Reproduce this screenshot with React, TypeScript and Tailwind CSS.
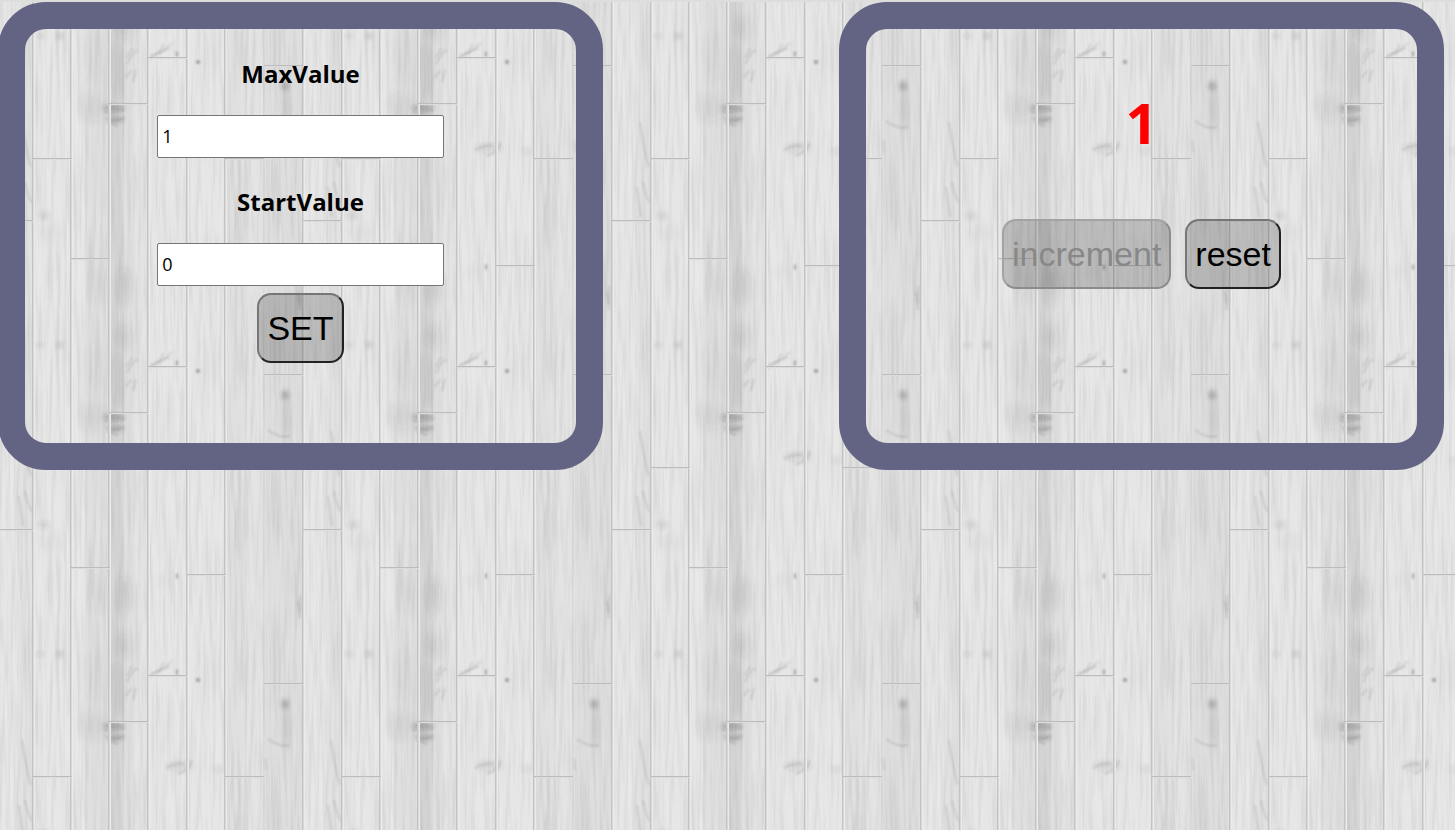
import { useState } from "react";
import type { ReactNode } from "react";

const seams = [33, 71, 109, 148, 187, 225, 264, 303];

const joints = [
  { x: -6, y: 219 },
  { x: 303, y: 219 },
  { x: 33, y: 157 },
  { x: 71, y: 257 },
  { x: 109, y: 102 },
  { x: 148, y: 56 },
  { x: 187, y: 264 },
  { x: 225, y: 157 },
  { x: 264, y: 64 },
];

const shades = [
  { x: 17, w: 15, o: 0.02 },
  { x: 85, w: 24, o: 0.03 },
  { x: 109, w: 15, o: 0.08 },
  { x: 124, w: 10, o: 0.03 },
  { x: 134, w: 14, o: 0.01 },
  { x: 225, w: 22, o: 0.03 },
  { x: 247, w: 17, o: 0.01 },
  { x: 264, w: 39, o: 0.04 },
];

const knots = [
  { x: 40, y: 34, rx: 4, ry: 2, o: 0.12 },
  { x: 60, y: 34, rx: 3, ry: 3, o: 0.18 },
  { x: 114, y: 106, rx: 11, ry: 3, o: 0.3 },
  { x: 116, y: 117, rx: 8, ry: 4, o: 0.2 },
  { x: 118, y: 70, rx: 6, ry: 28, o: 0.08 },
  { x: 285, y: 84, rx: 4, ry: 5, o: 0.26 },
  { x: 180, y: 146, rx: 14, ry: 5, o: 0.08 },
  { x: 219, y: 149, rx: 6, ry: 3, o: 0.08 },
  { x: 44, y: 214, rx: 6, ry: 4, o: 0.1 },
];

const stains = [
  { x: 94, y: 105, rx: 14, ry: 14, o: 0.07 },
  { x: 96, y: 60, rx: 10, ry: 30, o: 0.05 },
  { x: 100, y: 284, rx: 8, ry: 18, o: 0.05 },
  { x: 124, y: 26, rx: 8, ry: 12, o: 0.08 },
  { x: 124, y: 284, rx: 8, ry: 18, o: 0.09 },
  { x: 285, y: 106, rx: 5, ry: 20, o: 0.06 },
  { x: 50, y: 230, rx: 12, ry: 8, o: 0.03 },
  { x: 240, y: 220, rx: 5, ry: 24, o: 0.05 },
  { x: 162, y: 270, rx: 4, ry: 6, o: 0.05 },
];

const cracks = [
  "M22 120Q26 150 31 165M25 180Q28 196 32 201M19 185L23 215",
  "M127 62Q136 44 138 50M126 76Q130 68 132 70M133 80L136 68M127 56L132 46",
  "M149 57Q160 52 164 42M150 54L170 46M158 53L172 41",
  "M104 110Q116 112 124 108M106 116Q114 122 124 116M107 120L118 124",
  "M268 119Q280 128 290 125",
  "M178 154Q190 150 192 140M166 148Q176 142 184 144",
  "M300 284V302M298 290L300 308M265 138L266 150",
];

const specks = [
  { x: 177, y: 52, rx: 1, ry: 3 },
  { x: 177, y: 265, rx: 1, ry: 3 },
  { x: 198, y: 60, rx: 2, ry: 2 },
];

function WoodBackground() {
  return (
    <svg className="absolute inset-0 h-full w-full" aria-hidden="true">
      <defs>
        <filter id="grain" x="0" y="0" width="100%" height="100%" colorInterpolationFilters="sRGB">
          <feTurbulence type="fractalNoise" baseFrequency="0.28 0.014" numOctaves={3} seed={7} stitchTiles="stitch" />
          <feColorMatrix values="0 0 0 0 0.3  0 0 0 0 0.3  0 0 0 0 0.3  0.24 0 0 0 -0.095" />
        </filter>
        <filter id="light" x="0" y="0" width="100%" height="100%" colorInterpolationFilters="sRGB">
          <feTurbulence type="fractalNoise" baseFrequency="0.22 0.02" numOctaves={2} seed={23} stitchTiles="stitch" />
          <feColorMatrix values="0 0 0 0 1  0 0 0 0 1  0 0 0 0 1  0 1 0 0 -0.42" />
        </filter>
        <filter id="blurWide" x="-50%" y="-50%" width="200%" height="200%">
          <feGaussianBlur stdDeviation="4" />
        </filter>
        <filter id="blur" x="-50%" y="-50%" width="200%" height="200%">
          <feGaussianBlur stdDeviation="2" />
        </filter>
        <filter id="blurFine" x="-50%" y="-50%" width="200%" height="200%">
          <feGaussianBlur stdDeviation="0.8" />
        </filter>
        <pattern id="planks" width="309" height="309" patternUnits="userSpaceOnUse">
          <rect width="309" height="309" fill="#e6e6e6" />
          {shades.map((s) => (
            <rect key={s.x} x={s.x} width={s.w} height="309" fill="#000" opacity={s.o} />
          ))}
          <g filter="url(#blurWide)">
            {stains.map((k, i) => (
              <ellipse key={i} cx={k.x} cy={k.y} rx={k.rx} ry={k.ry} fill="#333" opacity={k.o} />
            ))}
          </g>
          <rect width="309" height="309" filter="url(#grain)" />
          <rect width="309" height="309" filter="url(#light)" opacity="0.3" />
          <g filter="url(#blur)">
            {knots.map((k, i) => (
              <ellipse key={i} cx={k.x} cy={k.y} rx={k.rx} ry={k.ry} fill="#333" opacity={k.o} />
            ))}
          </g>
          <g filter="url(#blurFine)">
            {cracks.map((d) => (
              <path key={d} d={d} fill="none" stroke="#555" strokeOpacity="0.34" />
            ))}
            {specks.map((k) => (
              <ellipse key={k.y} cx={k.x} cy={k.y} rx={k.rx} ry={k.ry} fill="#444" opacity="0.45" />
            ))}
          </g>
          {seams.map((x) => (
            <g key={x} opacity={x === 264 ? 0.35 : 1}>
              <rect x={x - 1} width="1" height="309" fill="#c3c3c3" />
              <rect x={x} width="1" height="309" fill="#d8d8d8" />
              <rect x={x + 1} width="1" height="309" fill="#ebebeb" />
            </g>
          ))}
          {joints.map((j) => (
            <g key={j.x}>
              <rect x={j.x} y={j.y - 1} width="39" height="1" fill="#bcbcbc" />
              <rect x={j.x} y={j.y} width="39" height="1" fill="#dcdcdc" />
            </g>
          ))}
        </pattern>
      </defs>
      <rect width="100%" height="100%" fill="url(#planks)" />
    </svg>
  );
}

function Panel({ children }: { children: ReactNode }) {
  return (
    <section className="flex min-w-0 flex-1 flex-col items-center rounded-[48px] border-[27px] border-[#636383]">
      {children}
    </section>
  );
}

function Button({ children, ...props }: { children: ReactNode; disabled?: boolean; onClick?: () => void }) {
  return (
    <button
      type="button"
      className="rounded-[14px] border-2 border-t-[#767676] border-r-[#212121] border-b-[#212121] border-l-[#767676] bg-black/18 px-2 py-[14px] font-['Liberation_Sans',Arial,sans-serif] text-[34px] leading-[38px] text-black disabled:border-t-[#a3a3a3] disabled:border-r-[#8c8c8c] disabled:border-b-[#8c8c8c] disabled:border-l-[#a3a3a3] disabled:text-[#888888]"
      {...props}
    >
      {children}
    </button>
  );
}

function Field(props: { id: string; label: string; value: number; onChange: (value: number) => void }) {
  return (
    <div className="flex w-full flex-col items-center gap-[25px]">
      <label htmlFor={props.id} className="text-2xl leading-8 font-bold">
        {props.label}
      </label>
      <input
        id={props.id}
        type="number"
        value={props.value}
        onChange={(e) => props.onChange(Number(e.target.value))}
        className="h-[43px] w-[52%] rounded-xs border border-[#767676] bg-white px-1 pb-[2px] text-lg text-black"
      />
    </div>
  );
}

export default function App() {
  const [max, setMax] = useState(1);
  const [start, setStart] = useState(0);
  const [count, setCount] = useState(1);

  return (
    <div className="relative min-h-screen overflow-hidden border-t-2 border-[#dcdedc] font-['Open_Sans','Noto_Sans',sans-serif] text-black">
      <div className="absolute inset-x-0 top-0 bottom-0">
        <WoodBackground />
      </div>
      <main className="relative mr-[11px] -ml-[2px] flex gap-[236px]">
        <Panel>
          <div className="flex w-full flex-col items-center gap-7 pt-[29px] pb-[7px]">
            <Field id="max" label="MaxValue" value={max} onChange={setMax} />
            <Field id="start" label="StartValue" value={start} onChange={setStart} />
          </div>
          <div className="pb-20">
            <Button onClick={() => setCount(start)}>SET</Button>
          </div>
        </Panel>
        <Panel>
          <output className="pt-[61px] pb-[65px] text-[56px] leading-[64px] font-bold text-[#ff0000]">{count}</output>
          <div className="flex gap-[14px]">
            <Button disabled={count >= max} onClick={() => setCount(count + 1)}>
              increment
            </Button>
            <Button onClick={() => setCount(start)}>reset</Button>
          </div>
        </Panel>
      </main>
    </div>
  );
}
